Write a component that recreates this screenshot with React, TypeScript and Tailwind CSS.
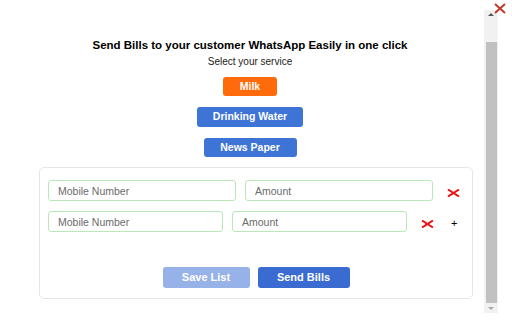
import React from "react";

function RedCross({ className }: { className?: string }) {
  return (
    <svg width="13" height="8" viewBox="0 0 13 8" className={className}>
      <path d="M1 0.5 L12 7.5 M12 0.5 L1 7.5" stroke="#ee1111" strokeWidth="2" />
    </svg>
  );
}

function Field({ placeholder, w }: { placeholder: string; w: string }) {
  return (
    <input
      placeholder={placeholder}
      className={`${w} h-[21px] rounded-[3px] border border-[#b9e8b9] bg-white px-[9px] text-[10.5px] text-[#333] outline-none placeholder:text-[#6b6b6b]`}
    />
  );
}

export default function App() {
  return (
    <div className="relative h-[320px] w-[512px] overflow-hidden bg-white font-['Liberation_Sans',Arial,sans-serif]">
      <div className="flex w-[484px] flex-col items-center pl-4 pt-[38px]">
        <h1 className="text-[11.5px] font-bold leading-[14px] text-black">
          Send Bills to your customer WhatsApp Easily in one click
        </h1>
        <p className="mt-[4px] text-[10px] leading-[12px] text-[#222]">
          Select your service
        </p>
        <button className="mt-[9px] h-[19px] w-[54px] rounded-[3px] bg-[#ff6a0a] text-[10.5px] font-bold text-white">
          Milk
        </button>
        <button className="mt-[11px] h-[20px] w-[106px] rounded-[3px] bg-[#3f74d7] text-[10.5px] font-bold text-white">
          Drinking Water
        </button>
        <button className="mt-[11px] h-[19px] w-[93px] rounded-[3px] bg-[#3f74d7] text-[10.5px] font-bold text-white">
          News Paper
        </button>
      </div>

      <div className="ml-[39px] mt-[10px] w-[434px] rounded-[5px] border border-[#e6e6e6] px-[8px] pb-[10px] pt-[12px]">
        <div className="flex items-center">
          <Field placeholder="Mobile Number" w="w-[188px]" />
          <Field placeholder="Amount" w="ml-[9px] w-[188px]" />
          <RedCross className="ml-[14px] mt-[4px]" />
        </div>
        <div className="mt-[10px] flex items-center">
          <Field placeholder="Mobile Number" w="w-[175px]" />
          <Field placeholder="Amount" w="ml-[9px] w-[175px]" />
          <RedCross className="ml-[14px] mt-[4px]" />
          <span className="ml-[17px] mt-[3px] text-[11px] leading-none text-black">+</span>
        </div>
        <div className="mt-[35px] flex justify-center gap-[8px]">
          <button className="h-[21px] w-[87px] rounded-[3px] bg-[#97b2e8] text-[11px] font-bold text-white">
            Save List
          </button>
          <button className="h-[21px] w-[92px] rounded-[3px] bg-[#3a6bd0] text-[11px] font-bold text-white">
            Send Bills
          </button>
        </div>
      </div>

      {/* fake scrollbar */}
      <div className="absolute left-[484px] top-[10px] h-[303px] w-[14px] bg-[#f1f1f1]">
        <div className="absolute left-[4px] top-[3px] h-0 w-0 border-x-[3px] border-b-[3px] border-x-transparent border-b-[#555]" />
        <div className="absolute left-[2px] top-[32px] h-[261px] w-[11px] bg-[#c1c1c1]" />
        <div className="absolute bottom-[3px] left-[4px] h-0 w-0 border-x-[3px] border-t-[3px] border-x-transparent border-t-[#aaa]" />
      </div>
      <svg width="12" height="11" viewBox="0 0 12 11" className="absolute left-[494px] top-[3px]">
        <path d="M1 1 L11 10 M11 1 L1 10" stroke="#c0392b" strokeWidth="2" />
      </svg>
    </div>
  );
}
